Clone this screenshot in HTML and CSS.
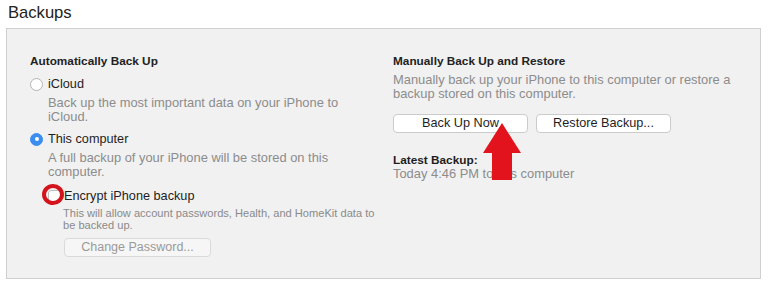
FILE: index.html
```html
<!DOCTYPE html>
<html>
<head>
<meta charset="utf-8">
<link rel="stylesheet" href="styles.css">
</head>
<body>
<h1 class="title">Backups</h1>
<div class="panel">
  <div class="col left">
    <div class="heading">Automatically Back Up</div>
    <div class="option first">
      <span class="radio"></span><span class="label">iCloud</span>
    </div>
    <div class="desc indent">Back up the most important data on your iPhone to<br>iCloud.</div>
    <div class="option second">
      <span class="radio checked"></span><span class="label">This computer</span>
    </div>
    <div class="desc indent">A full backup of your iPhone will be stored on this<br>computer.</div>
    <div class="encrypt">
      <span class="check"></span><span class="label">Encrypt iPhone backup</span>
      <span class="circle-mark"></span>
    </div>
    <div class="small-desc">This will allow account passwords, Health, and HomeKit data to<br>be backed up.</div>
    <button class="btn disabled">Change Password...</button>
  </div>
  <div class="col right">
    <div class="heading">Manually Back Up and Restore</div>
    <div class="desc">Manually back up your iPhone to this computer or restore a<br>backup stored on this computer.</div>
    <div class="buttons">
      <button class="btn wide">Back Up Now</button>
      <button class="btn wide">Restore Backup...</button>
      <svg class="arrow" width="38" height="57" viewBox="0 0 38 57"><polygon points="19,0 38,30 29,30 29,57 9,57 9,30 0,30" fill="#e2131c"/></svg>
    </div>
    <div class="latest">Latest Backup:</div>
    <div class="desc">Today 4:46 PM to this computer</div>
  </div>
</div>
</body>
</html>
```
FILE: styles.css
```css
html, body {
  margin: 0;
  padding: 0;
  background: #ffffff;
}
body {
  font-family: "Liberation Sans", Arial, sans-serif;
  font-size: 12.7px;
  color: #222;
  width: 768px;
  height: 284px;
  overflow: hidden;
}
.title {
  margin: 0;
  padding: 3px 0 0 8px;
  height: 25px;
  font-size: 16.6px;
  font-weight: normal;
  line-height: 19px;
  color: #222;
}
.panel {
  margin-left: 6px;
  width: 730px;
  height: 249px;
  border: 1px solid #cfcfcf;
  background: #f1f1f1;
  display: grid;
  grid-template-columns: 363px 1fr;
  padding-left: 23px;
}
.col {
  padding-top: 25px;
  line-height: 14px;
}
.heading {
  font-weight: bold;
  color: #222;
  font-size: 11.8px;
}
.option {
  display: flex;
  align-items: center;
  gap: 5px;
  height: 14px;
}
.option.first { margin-top: 9px; }
.option.second { margin-top: 8px; }
.radio {
  width: 11px;
  height: 11px;
  border: 1px solid #b5b5b5;
  border-radius: 50%;
  background: #fff;
  flex: none;
}
.radio.checked {
  border-color: #3b8ef0;
  background: #3b8ef0;
  position: relative;
}
.radio.checked::after {
  content: "";
  position: absolute;
  width: 4px;
  height: 4px;
  border-radius: 50%;
  background: #fff;
  left: 3.5px;
  top: 3.5px;
}
.label { color: #1e1e1e; }
.desc {
  color: #8c8c8c;
  margin-top: 5px;
  font-size: 12.9px;
}
.indent { margin-left: 18px; }
.encrypt {
  position: relative;
  margin-top: 10px;
  margin-left: 18px;
  display: flex;
  align-items: center;
  gap: 3px;
  height: 14px;
}
.check {
  width: 11px;
  height: 11px;
  border: 1px solid #bdbdbd;
  border-radius: 3px;
  background: #fff;
  flex: none;
}
.circle-mark {
  position: absolute;
  left: -6px;
  top: -5px;
  width: 14px;
  height: 13px;
  border: 4px solid #d4141c;
  border-radius: 50%;
}
.small-desc {
  margin-left: 33px;
  margin-top: 4px;
  font-size: 11.1px;
  line-height: 12px;
  color: #8a8a8a;
}
.btn {
  font-family: "Liberation Sans", Arial, sans-serif;
  font-size: 12.7px;
  height: 19px;
  padding: 0;
  border: 1px solid #cbcbcb;
  border-radius: 4px;
  background: #fff;
  color: #1e1e1e;
  line-height: 17px;
}
.btn.disabled {
  margin-top: 7px;
  margin-left: 34px;
  width: 147px;
  font-size: 12.5px;
  background: #f6f6f6;
  border-color: #dadada;
  color: #9a9a9a;
}
.buttons {
  position: relative;
  display: flex;
  gap: 8px;
  margin-top: 13px;
}
.btn.wide { width: 135px; }
.arrow {
  position: absolute;
  left: 90px;
  top: 9px;
}
.latest {
  margin-top: 20px;
  font-weight: bold;
  font-size: 11.8px;
  color: #1e1e1e;
}
.latest + .desc { margin-top: 0; }
```
